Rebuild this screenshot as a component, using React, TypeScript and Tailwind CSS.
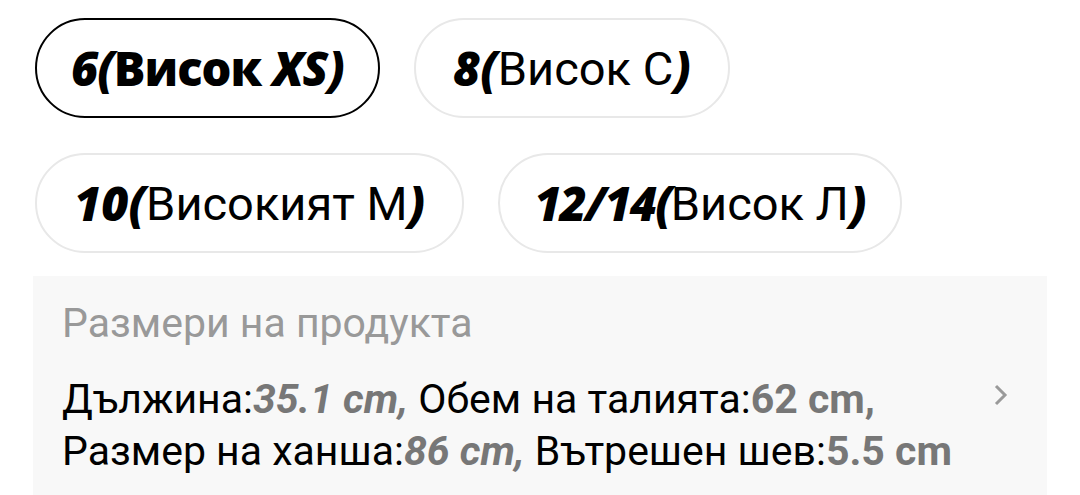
import React from "react";

const B = ({ children, tight }: { children: React.ReactNode; tight?: boolean }) => (
  <span
    className={`font-extrabold italic ${tight ? "tracking-[-2px]" : ""}`}
    style={{ fontFamily: "'Open Sans', Roboto, sans-serif" }}
  >
    {children}
  </span>
);

function Chip({ selected, wide, children }: { selected?: boolean; wide?: boolean; children: React.ReactNode }) {
  return (
    <div
      className={`h-[100px] rounded-full flex items-center text-[47px] leading-none text-black ${
        wide ? "px-[37px]" : "px-[34px]"
      } ${selected ? "border-2 border-black" : "border-2 border-[#e8e8e8]"}`}
    >
      {children}
    </div>
  );
}

export default function App() {
  return (
    <div
      className="w-[1080px] h-[495px] bg-white overflow-hidden"
      style={{ fontFamily: "Roboto, 'Noto Sans', sans-serif" }}
    >
      <div className="pt-[18px] pl-[35px] flex flex-col gap-[35px]">
        <div className="flex gap-[34px]">
          <Chip selected>
            <span
              className="font-extrabold tracking-[-1px]"
              style={{ fontFamily: "'Open Sans', Roboto, sans-serif" }}
            >
              <i>6(</i>Висок <i>XS)</i>
            </span>
          </Chip>
          <Chip wide>
            <B>8(</B>Висок С<B>)</B>
          </Chip>
        </div>
        <div className="flex gap-[34px]">
          <Chip wide>
            <B>10(</B>Високият М<B>)</B>
          </Chip>
          <Chip>
            <B tight>12/14(</B>Висок Л<B>)</B>
          </Chip>
        </div>
      </div>
      <div className="mt-[23px] ml-[33px] w-[1014px] h-[300px] bg-[#f8f8f8] pt-[23px] pl-[29px] pr-[38px] flex">
        <div className="flex-1">
          <div className="text-[41px] leading-[48px] text-[#999999]">Размери на продукта</div>
          <div className="mt-[26px] text-[41px] leading-[52px] text-black">
            <div>
              Дължина:<span className="font-bold italic text-[#777777]">35.1 cm,</span> Обем на талията:
              <span className="font-bold text-[#777777]">62 cm,</span>
            </div>
            <div>
              Размер на ханша:<span className="font-bold italic text-[#777777]">86 cm,</span> Вътрешен шев:
              <span className="font-bold text-[#777777]">5.5 cm</span>
            </div>
          </div>
        </div>
        <div className="pt-[84px]">
          <svg width="18" height="24" viewBox="0 0 18 24">
            <polyline points="5,3 14,12 5,21" fill="none" stroke="#9a9a9a" strokeWidth="3" />
          </svg>
        </div>
      </div>
    </div>
  );
}
